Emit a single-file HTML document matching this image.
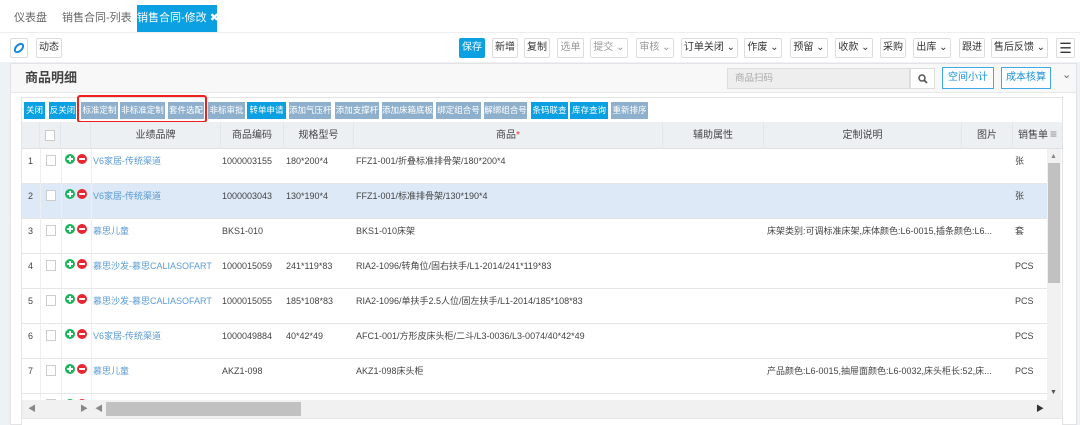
<!DOCTYPE html>
<html><head><meta charset="utf-8"><style>
*{box-sizing:border-box;margin:0;padding:0}
body{width:1080px;height:425px;overflow:hidden;background:#fff;font-family:"Liberation Sans","Noto Sans CJK SC",sans-serif;font-size:11px;color:#333;position:relative}
.a{position:absolute}
.tab{position:absolute;top:5px;height:26px;line-height:26px;font-size:11px;color:#666;white-space:nowrap}
.tb{position:absolute;top:38px;height:20px;line-height:18px;border:1px solid #ddd;border-radius:2px;background:#fff;font-size:10px;color:#333;text-align:center;white-space:nowrap;overflow:hidden}
.tb.g{color:#999}
.b{position:absolute;top:102px;height:17px;line-height:17px;font-size:8.5px;color:#fff;text-align:center;background:#8fb0cc;white-space:nowrap;overflow:hidden}
.b.bl{background:#0aa0e2}
.th{position:absolute;top:122px;height:27px;line-height:27px;text-align:center;font-size:10px;color:#444;border-right:1px solid #e4e7ea;white-space:nowrap;overflow:hidden}
.row{position:absolute;left:22px;width:1025px;height:35px;border-bottom:1px solid #e6e6e6}
.c{position:absolute;top:0;height:35px;line-height:24px;font-size:9px;color:#444;white-space:nowrap;overflow:hidden}
.lk{color:#5b9bd5}
.pm{position:absolute;top:5px;width:10px;height:10px;border-radius:50%}
.pm:after{content:"";position:absolute;left:2px;top:4px;width:6px;height:2px;background:#fff}
.plus:before{content:"";position:absolute;left:4px;top:2px;width:2px;height:6px;background:#fff}
.cb{position:absolute;left:24px;top:6px;width:10px;height:11px;border:1px solid #ccc;background:#fff}
</style></head><body>
<!-- tabs -->
<div class="tab" style="left:14px">仪表盘</div>
<div class="tab" style="left:62px">销售合同-列表</div>
<div class="a" style="left:137px;top:5px;width:80px;height:27px;background:#0aa0e2;color:#fff;line-height:27px;font-size:11px;text-align:center;white-space:nowrap">销售合同-修改 ✖</div>
<div class="a" style="left:0;top:32px;width:1080px;height:1px;background:#eee"></div>
<!-- toolbar -->
<div class="tb" style="left:10px;width:18px;top:38px"><svg width="12" height="12" viewBox="0 0 12 12" style="margin-top:3px"><ellipse cx="6" cy="6" rx="5" ry="3" transform="rotate(-45 6 6)" fill="none" stroke="#1a8ad8" stroke-width="2"/></svg></div>
<div class="tb" style="left:36px;width:26px">动态</div>
<div class="tb" style="left:459px;width:26px;background:#0aa0e2;color:#fff;border-color:#0aa0e2">保存</div>
<div class="tb" style="left:492px;width:26px">新增</div>
<div class="tb" style="left:524px;width:26px">复制</div>
<div class="tb g" style="left:557px;width:27px">选单</div>
<div class="tb g" style="left:590px;width:38px">提交 ⌄</div>
<div class="tb g" style="left:636px;width:38px">审核 ⌄</div>
<div class="tb" style="left:681px;width:57px">订单关闭 ⌄</div>
<div class="tb" style="left:744px;width:38px">作废 ⌄</div>
<div class="tb" style="left:790px;width:38px">预留 ⌄</div>
<div class="tb" style="left:835px;width:38px">收款 ⌄</div>
<div class="tb" style="left:880px;width:26px">采购</div>
<div class="tb" style="left:913px;width:38px">出库 ⌄</div>
<div class="tb" style="left:959px;width:26px">跟进</div>
<div class="tb" style="left:991px;width:57px">售后反馈 ⌄</div>
<div class="tb" style="left:1056px;width:19px;font-size:14px">☰</div>
<!-- grey bg -->
<div class="a" style="left:0;top:62px;width:1080px;height:363px;background:#eef1f5"></div>
<div class="a" style="left:10px;top:63px;width:1067px;height:362px;background:#fff;border:1px solid #e3e3e3"></div>
<div class="a" style="left:11px;top:64px;width:1065px;height:29px;background:#f8f8f8;border-bottom:1px solid #e8e8e8"></div>
<div class="a" style="left:25px;top:68px;font-size:13px;font-weight:bold;color:#444;line-height:20px">商品明细</div>
<div class="a" style="left:727px;top:68px;width:183px;height:21px;background:#eee;border:1px solid #ddd;color:#aaa;font-size:9.5px;line-height:19px;padding-left:7px">商品扫码</div>
<div class="a" style="left:910px;top:68px;width:25px;height:21px;background:#fff;border:1px solid #ddd"><svg width="23" height="19" viewBox="0 0 23 19"><circle cx="11" cy="9" r="3" fill="none" stroke="#555" stroke-width="1.5"/><path d="M13 11l3 3" stroke="#555" stroke-width="1.8"/></svg></div>
<div class="a" style="left:942px;top:67px;width:52px;height:22px;border:1px solid #3fa9e6;color:#1a90d8;font-size:10px;text-align:center;line-height:20px;background:#fff">空间小计</div>
<div class="a" style="left:1001px;top:67px;width:50px;height:22px;border:1px solid #3fa9e6;color:#1a90d8;font-size:10px;text-align:center;line-height:20px;background:#fff">成本核算</div>
<div class="a" style="left:1062px;top:68px;font-size:11px;color:#666">⌄</div>
<!-- table frame -->
<div class="a" style="left:21px;top:97px;width:1042px;height:328px;border:1px solid #e3e3e3"></div>
<!-- buttons -->
<div class="b bl" style="left:24px;width:21px">关闭</div>
<div class="b bl" style="left:49px;width:27px">反关闭</div>
<div class="b" style="left:81px;width:37px">标准定制</div>
<div class="b" style="left:120px;width:45px">非标准定制</div>
<div class="b" style="left:168px;width:36px">套件选配</div>
<div class="b" style="left:208px;width:37px">非标审批</div>
<div class="b bl" style="left:247px;width:39px">转单申请</div>
<div class="b" style="left:289px;width:42px">添加气压杆</div>
<div class="b" style="left:335px;width:44px">添加支撑杆</div>
<div class="b" style="left:382px;width:51px">添加床箱底板</div>
<div class="b" style="left:436px;width:45px">绑定组合号</div>
<div class="b" style="left:484px;width:43px">解绑组合号</div>
<div class="b bl" style="left:531px;width:37px">条码联查</div>
<div class="b bl" style="left:570px;width:38px">库存查询</div>
<div class="b" style="left:611px;width:37px">重新排序</div>
<div class="a" style="left:77px;top:95px;width:130px;height:28px;border:2px solid #f0201c;border-radius:3px"></div>
<!-- header -->
<div class="a" style="left:22px;top:122px;width:1040px;height:27px;background:#edf0f3;border-bottom:1px solid #e0e0e0"></div>
<div class="th" style="left:22px;width:18px"></div>
<div class="th" style="left:40px;width:21px"><div class="cb" style="left:5px;top:8px"></div></div>
<div class="th" style="left:61px;width:30px"></div>
<div class="th" style="left:91px;width:130px">业绩品牌</div>
<div class="th" style="left:221px;width:63px">商品编码</div>
<div class="th" style="left:284px;width:70px">规格型号</div>
<div class="th" style="left:354px;width:309px">商品<span style="color:#e33">*</span></div>
<div class="th" style="left:663px;width:101px">辅助属性</div>
<div class="th" style="left:764px;width:198px">定制说明</div>
<div class="th" style="left:962px;width:51px">图片</div>
<div class="th" style="left:1013px;width:35px;border:0;text-align:left;padding-left:5px">销售单位</div>
<div class="a" style="left:1050px;top:127px;color:#888;font-size:12px;background:#edf0f3">≡</div>
<!-- rows -->
<div class="row" style="top:149px"><div class="c" style="left:6px">1</div><div class="cb"></div><div class="pm plus" style="left:43px;background:#1bb55c"></div><div class="pm" style="left:55px;background:#e8262f"></div><div class="c lk" style="left:71px">V6家居-传统渠道</div><div class="c" style="left:200px">1000003155</div><div class="c" style="left:264px">180*200*4</div><div class="c" style="left:334px">FFZ1-001/折叠标准排骨架/180*200*4</div><div class="c" style="left:993px">张</div></div>
<div class="row" style="top:184px;background:#dde9f7"><div class="c" style="left:6px">2</div><div class="cb"></div><div class="pm plus" style="left:43px;background:#1bb55c"></div><div class="pm" style="left:55px;background:#e8262f"></div><div class="c lk" style="left:71px">V6家居-传统渠道</div><div class="c" style="left:200px">1000003043</div><div class="c" style="left:264px">130*190*4</div><div class="c" style="left:334px">FFZ1-001/标准排骨架/130*190*4</div><div class="c" style="left:993px">张</div></div>
<div class="row" style="top:219px"><div class="c" style="left:6px">3</div><div class="cb"></div><div class="pm plus" style="left:43px;background:#1bb55c"></div><div class="pm" style="left:55px;background:#e8262f"></div><div class="c lk" style="left:71px">慕思儿童</div><div class="c" style="left:200px">BKS1-010</div><div class="c" style="left:334px">BKS1-010床架</div><div class="c" style="left:745px">床架类别:可调标准床架,床体颜色:L6-0015,插条颜色:L6...</div><div class="c" style="left:993px">套</div></div>
<div class="row" style="top:254px"><div class="c" style="left:6px">4</div><div class="cb"></div><div class="pm plus" style="left:43px;background:#1bb55c"></div><div class="pm" style="left:55px;background:#e8262f"></div><div class="c lk" style="left:71px">慕思沙发-慕思CALIASOFART</div><div class="c" style="left:200px">1000015059</div><div class="c" style="left:264px">241*119*83</div><div class="c" style="left:334px">RIA2-1096/转角位/固右扶手/L1-2014/241*119*83</div><div class="c" style="left:993px">PCS</div></div>
<div class="row" style="top:289px"><div class="c" style="left:6px">5</div><div class="cb"></div><div class="pm plus" style="left:43px;background:#1bb55c"></div><div class="pm" style="left:55px;background:#e8262f"></div><div class="c lk" style="left:71px">慕思沙发-慕思CALIASOFART</div><div class="c" style="left:200px">1000015055</div><div class="c" style="left:264px">185*108*83</div><div class="c" style="left:334px">RIA2-1096/单扶手2.5人位/固左扶手/L1-2014/185*108*83</div><div class="c" style="left:993px">PCS</div></div>
<div class="row" style="top:324px"><div class="c" style="left:6px">6</div><div class="cb"></div><div class="pm plus" style="left:43px;background:#1bb55c"></div><div class="pm" style="left:55px;background:#e8262f"></div><div class="c lk" style="left:71px">V6家居-传统渠道</div><div class="c" style="left:200px">1000049884</div><div class="c" style="left:264px">40*42*49</div><div class="c" style="left:334px">AFC1-001/方形皮床头柜/二斗/L3-0036/L3-0074/40*42*49</div><div class="c" style="left:993px">PCS</div></div>
<div class="row" style="top:359px"><div class="c" style="left:6px">7</div><div class="cb"></div><div class="pm plus" style="left:43px;background:#1bb55c"></div><div class="pm" style="left:55px;background:#e8262f"></div><div class="c lk" style="left:71px">慕思儿童</div><div class="c" style="left:200px">AKZ1-098</div><div class="c" style="left:334px">AKZ1-098床头柜</div><div class="c" style="left:745px">产品颜色:L6-0015,抽屉面颜色:L6-0032,床头柜长:52,床...</div><div class="c" style="left:993px">PCS</div></div>
<div class="row" style="top:394px;height:10px;border:0"><div class="cb" style="top:5px"></div><div class="pm plus" style="left:43px;background:#1bb55c"></div><div class="pm" style="left:55px;background:#e8262f"></div></div>
<!-- column lines in body -->
<div class="a" style="left:40px;top:149px;width:1px;height:252px;background:#eee"></div>
<div class="a" style="left:61px;top:149px;width:1px;height:252px;background:#eee"></div>
<div class="a" style="left:91px;top:149px;width:1px;height:252px;background:#eee"></div>
<!-- v scrollbar -->
<div class="a" style="left:1047px;top:149px;width:14px;height:252px;background:#f1f1f1"></div>
<div class="a" style="left:1050px;top:153px;font-size:7px;color:#888">▲</div>
<div class="a" style="left:1048px;top:163px;width:12px;height:120px;background:#c1c1c1"></div>
<div class="a" style="left:1050px;top:389px;font-size:7px;color:#555">▼</div>
<!-- h scrollbar -->
<div class="a" style="left:22px;top:400px;width:1040px;height:18px;background:#f1f1f1"></div>
<div class="a" style="left:28px;top:403px;font-size:8px;color:#888">◀</div>
<div class="a" style="left:80px;top:403px;font-size:8px;color:#888">▶</div>
<div class="a" style="left:95px;top:403px;font-size:8px;color:#888">◀</div>
<div class="a" style="left:106px;top:402px;width:195px;height:14px;background:#c1c1c1"></div>
<div class="a" style="left:1036px;top:403px;font-size:8px;color:#333">▶</div>
<div class="a" style="left:22px;top:418px;width:1040px;height:7px;background:#fff;border-top:1px solid #e6e6e6"></div>
</body></html>
